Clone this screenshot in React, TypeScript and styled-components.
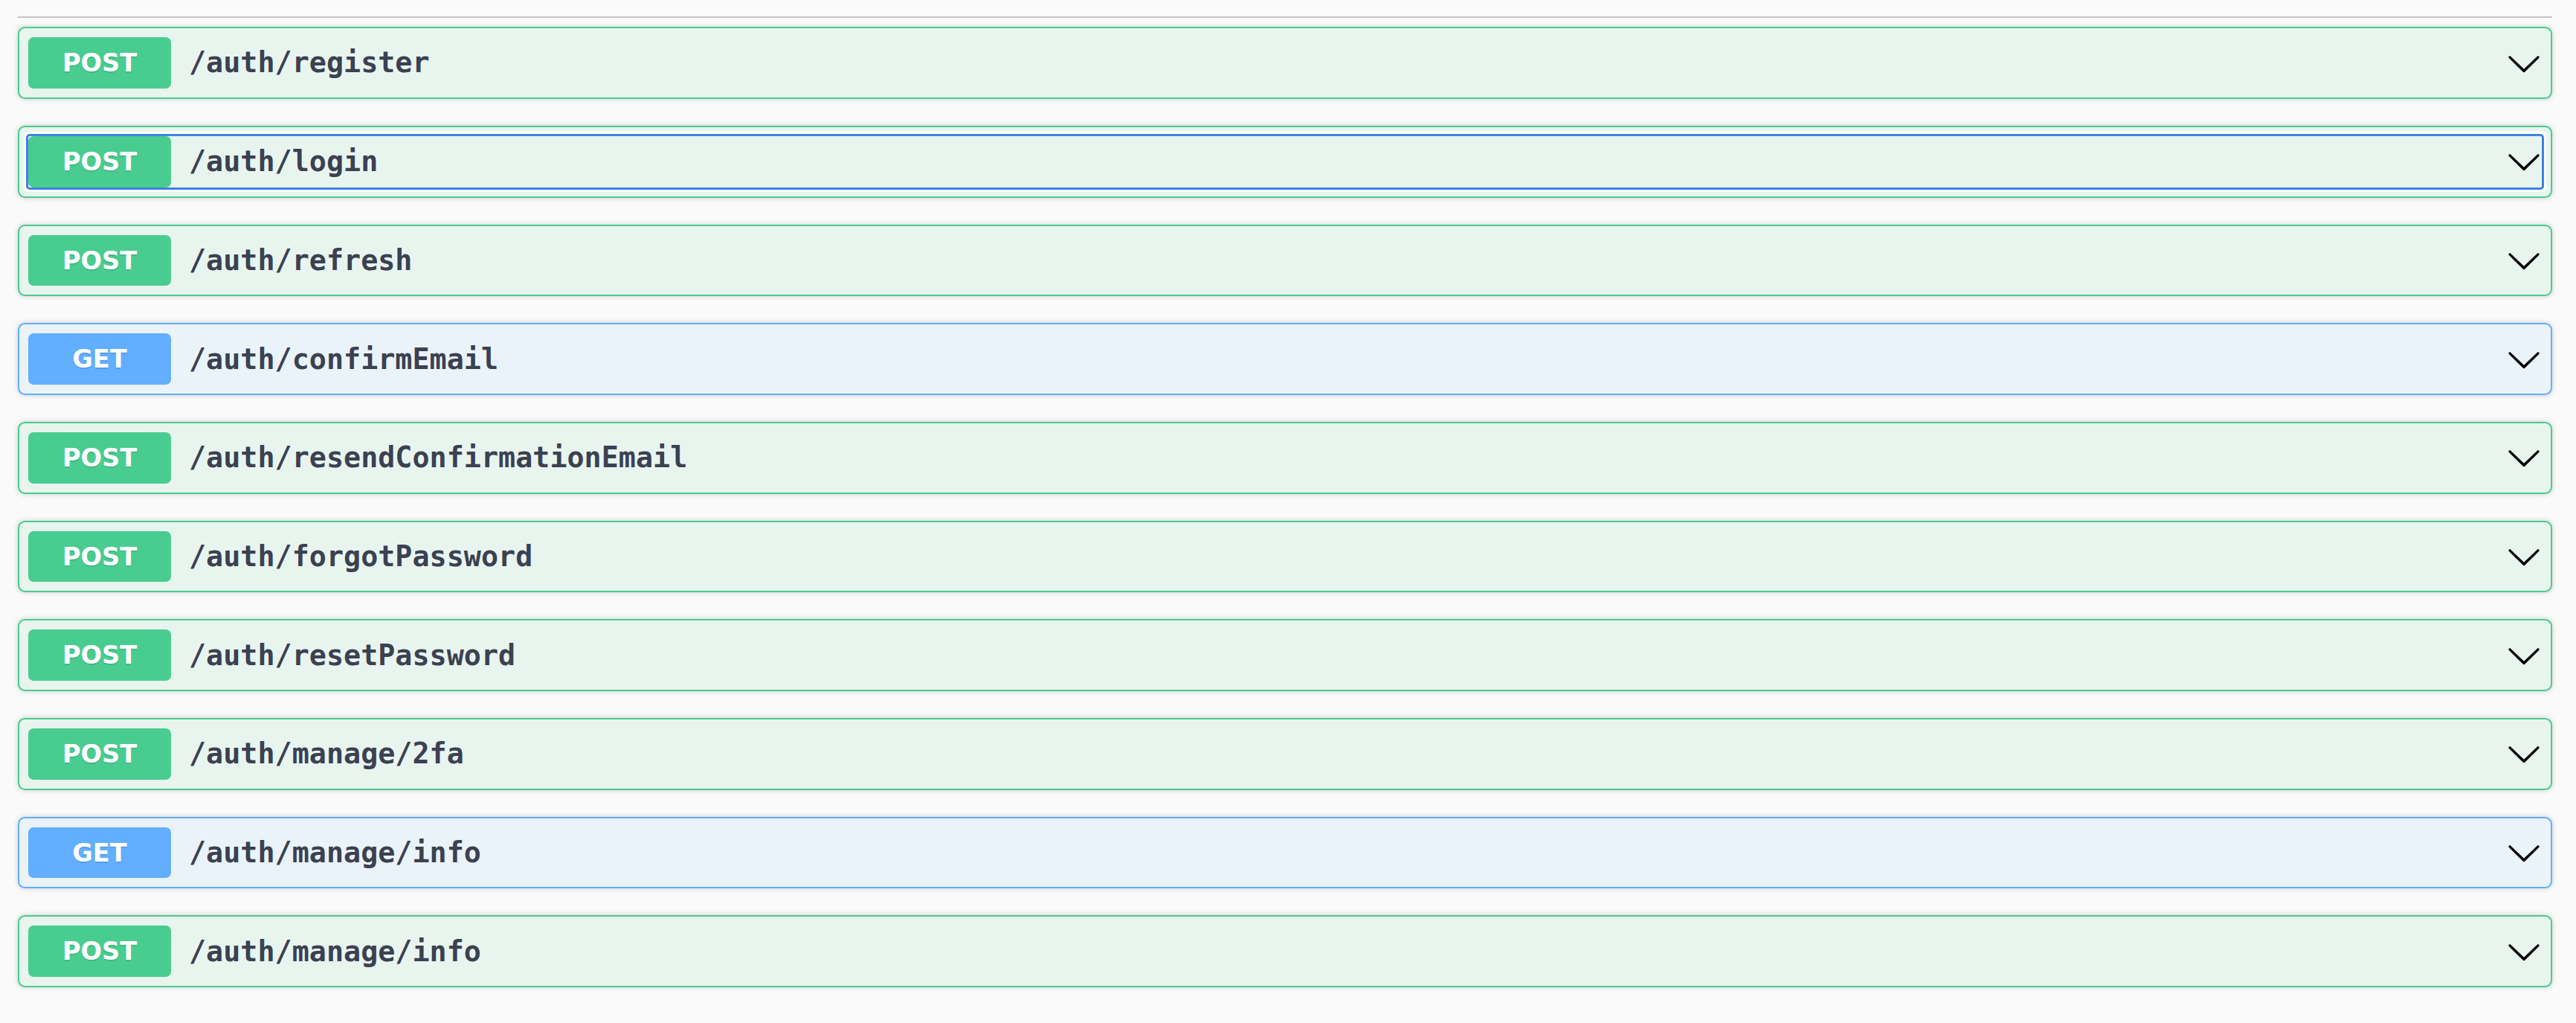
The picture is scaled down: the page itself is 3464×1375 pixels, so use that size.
import React from "react";
import styled, { createGlobalStyle, css } from "styled-components";

type Method = "get" | "post";

const palette: Record<Method, { main: string; bg: string }> = {
  post: { main: "#49cc90", bg: "#e8f5ef" },
  get: { main: "#61affe", bg: "#ebf3fa" },
};

const GlobalStyle = createGlobalStyle`
  html, body {
    margin: 0;
    padding: 0;
    background: #fafafa;
  }
  body {
    font-family: "DejaVu Sans", sans-serif;
  }
`;

const Page = styled.div`
  padding: 22px 32px 0 24px;
  min-height: 1375px;
  box-sizing: border-box;
`;

const Divider = styled.div`
  height: 2px;
  background: #c1c3c7;
  margin-bottom: 12.3px;
`;

const List = styled.div`
  display: flex;
  flex-direction: column;
  gap: 36px;
`;

const Block = styled.div<{ $method: Method }>`
  border: 2px solid ${(p) => palette[p.$method].main};
  background: ${(p) => palette[p.$method].bg};
  border-radius: 9.6px;
  box-shadow: 0 0 7.2px rgba(0, 0, 0, 0.19);
  padding: 12px;
`;

const Summary = styled.div<{ $focused?: boolean }>`
  display: flex;
  align-items: center;
  border-radius: 2px;
  ${(p) =>
    p.$focused &&
    css`
      outline: 3.6px solid #3b84e2;
      outline-offset: 0.4px;
      box-shadow: 0 0 0 6px #ffffff;
    `}
`;

const MethodBadge = styled.span<{ $method: Method }>`
  flex: 0 0 192px;
  height: 68.7px;
  display: flex;
  align-items: center;
  justify-content: center;
  background: ${(p) => palette[p.$method].main};
  border-radius: 7.2px;
  color: #ffffff;
  font-family: "DejaVu Sans", sans-serif;
  font-weight: 700;
  font-size: 33.6px;
  text-shadow: 0 2.4px 0 rgba(0, 0, 0, 0.1);
`;

const Path = styled.span`
  flex: 1;
  padding: 0 24px;
  color: #3b4151;
  font-family: "DejaVu Sans Mono", monospace;
  font-weight: 600;
  font-size: 38.4px;
  line-height: 1;
`;

const ArrowBox = styled.span`
  width: 48px;
  height: 48px;
  display: flex;
  align-items: center;
  justify-content: center;
`;

const Arrow = () => (
  <ArrowBox>
    <svg width="48" height="48" viewBox="0 0 20 20" aria-hidden="true">
      <path
        fill="#000"
        d="M17.418 6.109c.272-.268.709-.268.979 0s.271.701 0 .969l-7.908 7.83c-.27.268-.707.268-.979 0l-7.908-7.83c-.27-.268-.27-.701 0-.969.271-.268.709-.268.979 0L10 13.25l7.418-7.141z"
      />
    </svg>
  </ArrowBox>
);

const ops: { method: Method; path: string }[] = [
  { method: "post", path: "/auth/register" },
  { method: "post", path: "/auth/login" },
  { method: "post", path: "/auth/refresh" },
  { method: "get", path: "/auth/confirmEmail" },
  { method: "post", path: "/auth/resendConfirmationEmail" },
  { method: "post", path: "/auth/forgotPassword" },
  { method: "post", path: "/auth/resetPassword" },
  { method: "post", path: "/auth/manage/2fa" },
  { method: "get", path: "/auth/manage/info" },
  { method: "post", path: "/auth/manage/info" },
];

export default function App() {
  return (
    <>
      <GlobalStyle />
      <Page>
        <Divider />
        <List>
          {ops.map((op, i) => (
            <Block key={i} $method={op.method}>
              <Summary $focused={i === 1}>
                <MethodBadge $method={op.method}>{op.method.toUpperCase()}</MethodBadge>
                <Path>{op.path}</Path>
                <Arrow />
              </Summary>
            </Block>
          ))}
        </List>
      </Page>
    </>
  );
}
